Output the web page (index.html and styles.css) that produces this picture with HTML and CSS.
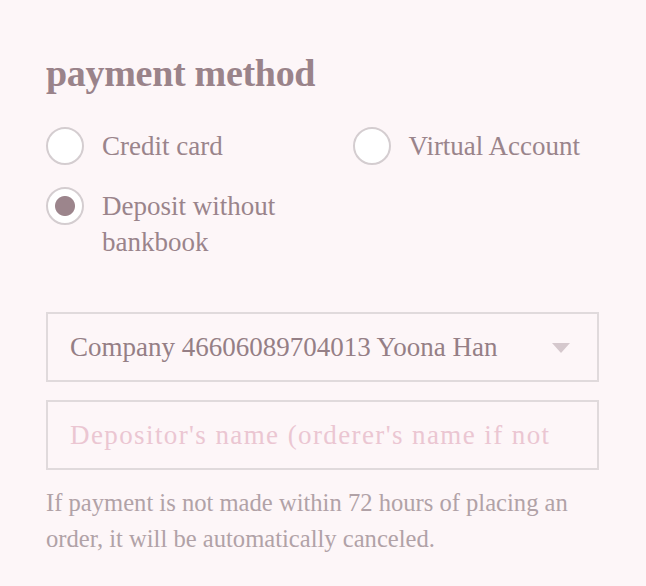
FILE: index.html
```html
<!DOCTYPE html>
<html lang="en">
<head>
<meta charset="utf-8">
<title>payment method</title>
<link rel="stylesheet" href="styles.css">
</head>
<body>
<section class="payment">
  <h2 class="title">payment method</h2>
  <div class="options">
    <label class="option">
      <input class="radio" type="radio" name="pay" value="card">
      <span class="option-label">Credit card</span>
    </label>
    <label class="option">
      <input class="radio" type="radio" name="pay" value="virtual">
      <span class="option-label">Virtual Account</span>
    </label>
    <label class="option">
      <input class="radio" type="radio" name="pay" value="deposit" checked>
      <span class="option-label">Deposit without bankbook</span>
    </label>
  </div>
  <div class="select-wrap">
    <select class="select">
      <option>Company 46606089704013 Yoona Han</option>
    </select>
    <svg class="select-arrow" width="18" height="10" viewBox="0 0 18 10" aria-hidden="true"><path d="M0 0 H18 L9 10 Z" fill="#d5c8cd"/></svg>
  </div>
  <input class="field" type="text" placeholder="Depositor's name (orderer's name if not entered)">
  <p class="note">If payment is not made within 72 hours of placing an order, it will be automatically canceled.</p>
</section>
</body>
</html>
```

FILE: styles.css
```css
html, body {
  margin: 0;
  padding: 0;
}
body {
  background: #fdf6f8;
  font-family: "Liberation Serif", "Times New Roman", serif;
  color: #9a848b;
}
.payment {
  padding: 48px 47px 20px 46px;
  display: flex;
  flex-direction: column;
}
.title {
  margin: 0;
  font-size: 38px;
  font-weight: bold;
  line-height: 50px;
  color: #9a838a;
  letter-spacing: -0.3px;
}
.options {
  margin-top: 30px;
  display: grid;
  grid-template-columns: 1fr 1fr;
  column-gap: 60px;
  row-gap: 23px;
}
.option {
  display: flex;
  align-items: flex-start;
  gap: 18px;
  font-size: 27px;
  line-height: 36px;
  cursor: pointer;
}
.radio {
  appearance: none;
  -webkit-appearance: none;
  margin: -1px 0 0 0;
  flex: 0 0 38px;
  width: 38px;
  height: 38px;
  border-radius: 50%;
  border: 2px solid #d4cdd0;
  background: #fff;
}
.radio:checked {
  background: radial-gradient(circle, #9c858c 0 9.5px, #ffffff 10.5px);
}
.option-label {
  color: #9a848b;
}
.select-wrap {
  position: relative;
  margin-top: 52px;
}
.select {
  appearance: none;
  -webkit-appearance: none;
  display: block;
  width: 100%;
  height: 70px;
  box-sizing: border-box;
  border: 2px solid #e0dadc;
  border-radius: 0;
  background: #fdf6f8;
  padding: 0 60px 0 22px;
  font-family: inherit;
  font-size: 27px;
  color: #957f86;
}
.select-arrow {
  position: absolute;
  right: 29px;
  top: 31px;
  pointer-events: none;
}
.field {
  display: block;
  margin-top: 18px;
  width: 100%;
  height: 70px;
  box-sizing: border-box;
  border: 2px solid #e0dadc;
  border-radius: 0;
  background: #fdf6f8;
  padding: 0 44px 0 22px;
  font-family: inherit;
  font-size: 27px;
  letter-spacing: 1.4px;
  color: #957f86;
}
.field::placeholder {
  color: #ebc6d2;
  opacity: 1;
}
.note {
  margin: 15px 0 0;
  font-size: 24.6px;
  line-height: 36px;
  color: #b1a2a7;
}
```
